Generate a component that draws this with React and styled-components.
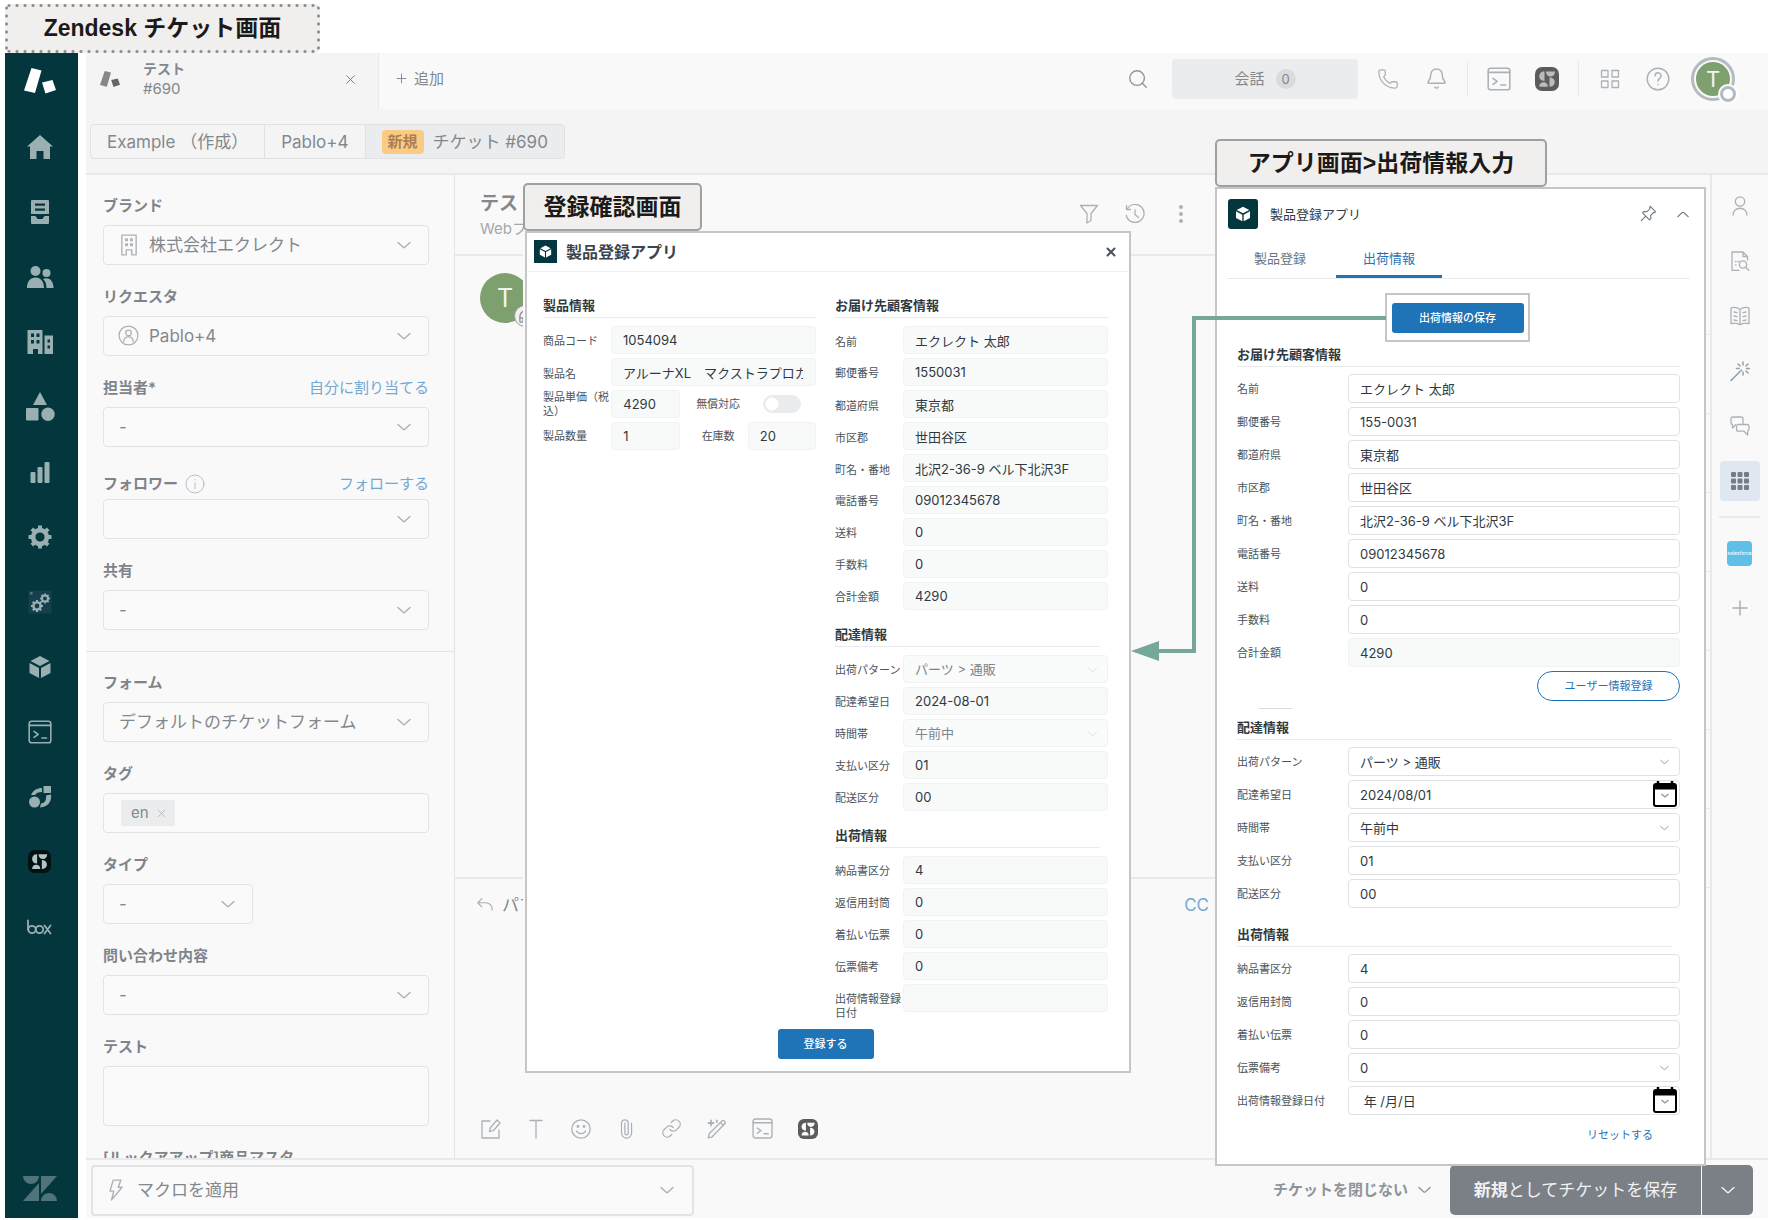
import React, { useId } from 'react'
import styled, { createGlobalStyle, css } from 'styled-components'
import { Search, Phone, Bell, Headphones, Paperclip, Link as LinkIcon, Plus, X } from 'lucide-react'

const colors = {
  nav: '#03363d',
  navIcon: '#9aafb1',
  bg: '#f9f9f9',
  bar: '#f4f4f4',
  line: '#e8e9ea',
  text: '#83888d',
  label: '#7f848a',
  icon: '#abb1b7',
  ink: '#2f3941',
  blue: '#1f73b7',
  softBlue: '#74a8d4',
  frame: '#c6c6c6',
  arrow: '#76a79b',
}

/* ---------- icons ---------- */

const Line = ({ size = 20, width = 1.3, children, ...rest }) => (
  <svg
    width={size}
    height={size}
    viewBox="0 0 20 20"
    fill="none"
    stroke="currentColor"
    strokeWidth={width}
    strokeLinejoin="round"
    strokeLinecap="round"
    aria-hidden="true"
    {...rest}
  >
    {children}
  </svg>
)

const Solid = ({ size = 28, children }) => (
  <svg width={size} height={size} viewBox="0 0 28 28" fill="currentColor" aria-hidden="true">
    {children}
  </svg>
)

const ChevronIcon = ({ width = 14 }) => (
  <svg width={width} height={width / 2 + 2} viewBox="0 0 14 9" fill="none" stroke="currentColor" strokeWidth="1.4" strokeLinecap="round" strokeLinejoin="round" aria-hidden="true">
    <path d="M1 1.5l5 4.6c.6.5 1.400.5 2 0l5-4.600" />
  </svg>
)

const TilesIcon = ({ width, second = 'currentColor' }) => (
  <svg width={width} viewBox="0 0 32 26" fill="currentColor" aria-hidden="true">
    <path d="M7.500 0l10 2.500L11 25 0 22.500z" />
    <path d="M18 14.500L28.500 12 32 22l-10.500 3.500z" fill={second} />
  </svg>
)

const TerminalIcon = ({ size = 22 }) => (
  <Line size={size}>
    <rect x="1" y="1" width="18" height="18" rx="2" />
    <path d="M1 4.500h18M5 9.500l3.500 2.500L5 14.500M11.500 15h4" />
  </Line>
)

const StepIcon = ({ bg, fg, size = 23 }) => (
  <svg width={size} height={size} viewBox="0 0 24 24" aria-hidden="true">
    <rect width="24" height="24" rx="7" fill={bg} />
    <g fill={fg}>
      <path d="M9.500 4.500v9.500C6 14 4.300 12 4.300 9.300S6 4.500 9.500 4.500z" />
      <path d="M11 4.500h9c0 3-1.800 5-4.500 5s-4.500-2-4.500-5z" />
      <path d="M14.500 10.500c3 0 5.200 1.600 5.200 4.600s-2.200 4.700-5.200 4.700z" />
      <path d="M4.300 19.800c0-3 1.600-4.500 4.200-4.500s4.300 1.500 4.300 4.500z" />
    </g>
  </svg>
)

const CubeIcon = ({ size = 24 }) => (
  <svg width={size} height={size} viewBox="0 0 24 24" fill="currentColor" aria-hidden="true">
    <path d="M12 1l9.500 5L12 11 2.500 6zM1.500 8l9.500 5v10l-9.500-5zM22.500 8L13 13v10l9.500-5z" />
  </svg>
)

const HomeIcon = () => (
  <Solid><path d="M14 2l13 11.500h-3V26h-6.500v-8h-7v8H4V13.500H1z" /></Solid>
)
const ViewsIcon = () => (
  <Solid>
    <path fillRule="evenodd" d="M6 2h16a1 1 0 0 1 1 1v13H5V3a1 1 0 0 1 1-1zm3 3.500v2.200h10V5.500zm0 5v2.200h10v-2.200z" />
    <path d="M5 18h4.500l2 3h5l2-3H23v7a1 1 0 0 1-1 1H6a1 1 0 0 1-1-1z" />
  </Solid>
)
const UsersIcon = () => (
  <Solid>
    <circle cx="9.500" cy="8" r="5" />
    <circle cx="20.500" cy="10" r="4" />
    <path d="M1 25c0-6 3-10.500 8.500-10.500S18 19 18 25zM17 16c6-2.500 10.500 1.500 10.500 9h-7c0-4-1-7-3.500-9z" />
  </Solid>
)
const OrgIcon = () => (
  <Solid>
    <path fillRule="evenodd" d="M1.500 2h15v24H12v-5H7v5H1.500zM5 5.500V9h3V5.500zm5.500 0V9h3V5.500zM5 12v3.500h3V12zm5.500 0v3.500h3V12z" />
    <path fillRule="evenodd" d="M18.500 7.500H27V26h-8.500zm3 4v3h2.500v-3zm0 6v3h2.500v-3z" />
  </Solid>
)
const ShapesIcon = () => (
  <svg width="30" height="30" viewBox="0 0 30 30" fill="currentColor" aria-hidden="true">
    <path d="M15 0l7 13H8z" />
    <rect x="1" y="16" width="12.500" height="12.500" rx="1" />
    <circle cx="23" cy="22.300" r="6.700" />
  </svg>
)
const ChartIcon = () => (
  <Solid>
    <rect x="4.500" y="14" width="5" height="11" rx="1" />
    <rect x="11.500" y="9" width="5" height="16" rx="1" />
    <rect x="18.500" y="4" width="5" height="21" rx="1" />
  </Solid>
)
const Gear = ({ cx, cy, r }) => (
  <g>
    <circle cx={cx} cy={cy} r={r * 0.6} fill="none" stroke="currentColor" strokeWidth={r * 0.4} />
    {[0, 45, 90, 135, 180, 225, 270, 315].map((a) => (
      <rect key={a} x={cx - r * 0.17} y={cy - r} width={r * 0.34} height={r * 0.35} transform={`rotate(${a} ${cx} ${cy})`} />
    ))}
  </g>
)
const GearIcon = () => <Solid><Gear cx={14} cy={14} r={11.5} /></Solid>
const GearsIcon = () => (
  <Solid>
    <rect x="2.500" y="2.500" width="23" height="23" fill="#163f50" />
    <rect x="4" y="4" width="2.500" height="2.500" opacity=".5" />
    <Gear cx={11} cy={18} r={6} />
    <Gear cx={19} cy={10.5} r={5} />
  </Solid>
)
const FlowIcon = () => (
  <Solid>
    <circle cx="8.500" cy="19" r="5.500" />
    <path d="M17.500 3H25v7h-7.500zM5 12c2-4.500 6-7 11-7v4c-3.500 0-6 1-7 3zM25 11.500c1 7-3 12.500-11 13l1-4c4-.5 5.500-3.500 5-8z" />
  </Solid>
)
const BoxIcon = () => (
  <svg width="25" height="16" viewBox="0 0 25 16" fill="none" stroke="currentColor" strokeWidth="1.800" strokeLinecap="round" aria-hidden="true">
    <path d="M1 1.500v9M17.500 6.500l6 8M23.500 6.500l-6 8" />
    <circle cx="5" cy="10.500" r="3.700" />
    <circle cx="12.500" cy="10.500" r="3.700" />
  </svg>
)
const ZendeskIcon = () => (
  <svg width="34" height="25" viewBox="0 0 34 25" fill="#4f7479" aria-label="Zendesk">
    <path d="M0 0h16a8 8 0 0 1-16 0zM16 7v18H0zM18 0h16L18 18zM18 25a8 8 0 0 1 16 0z" />
  </svg>
)
const BuildingIcon = () => (
  <Line size={22} width={1.2}>
    <path d="M3.500 1h13v18h-4v-4.500h-5V19h-4z" />
    <path d="M7 4.500h1.500v1.500H7zM11.500 4.500H13v1.500h-1.500zM7 9h1.500v1.500H7zM11.500 9H13v1.500h-1.500z" />
  </Line>
)
const PersonCircleIcon = () => (
  <Line size={21} width={1.2}>
    <circle cx="10" cy="10" r="9" />
    <circle cx="10" cy="7.500" r="2.700" />
    <path d="M5.500 16c0-3.500 2-4.800 4.500-4.800s4.500 1.300 4.500 4.800" />
  </Line>
)
const InfoIcon = () => (
  <Line size={20} width={1}>
    <circle cx="10" cy="10" r="9" />
    <path d="M10 9v6M10 5.500v.5" />
  </Line>
)
const BoltIcon = () => (
  <Line size={22}><path d="M7.500 1h7L12 7.500h3.500L6 19l2-8H4.500z" /></Line>
)
const FunnelIcon = () => <Line><path d="M1.500 1.500h17l-6.500 8v7l-4 2.500V9.500z" /></Line>
const HistoryIcon = () => (
  <Line>
    <path d="M2.500 4.500a9 9 0 1 1-1.200 7M1.500 1.500v4h4M10 6v4.500l3.500 3" />
  </Line>
)
const DotsIcon = () => (
  <svg width="20" height="20" viewBox="0 0 20 20" fill="currentColor" aria-hidden="true">
    <circle cx="10" cy="3" r="2" /><circle cx="10" cy="10" r="2" /><circle cx="10" cy="17" r="2" />
  </svg>
)
const ReplyIcon = () => (
  <Line size={18}><path d="M6.500 3L2 7.500 6.500 12M2 7.500h8c5 0 8 3 8 8" /></Line>
)
const EditIcon = () => (
  <Line><path d="M9 2H1v17h17v-8M16 1l3 3-6.500 7.500-4 1.200.8-4z" /></Line>
)
const TextIcon = () => <Line><path d="M4 1.500h12M10 1.500v17.500" /></Line>
const SmileIcon = () => (
  <Line>
    <circle cx="10" cy="10" r="9.200" />
    <path d="M5.500 12c1.800 3.500 7.200 3.500 9 0" />
    <circle cx="7" cy="7.500" r=".8" fill="currentColor" />
    <circle cx="13" cy="7.500" r=".8" fill="currentColor" />
  </Line>
)
const MagicPenIcon = () => (
  <Line>
    <path d="M1.200 18.800l1-4L15.500 1.500c.8-.8 3.500 1.700 2.700 2.700L5.200 17.800zM13.500 3.500l3 3" />
    <path d="M4 1.500v5M1.500 4h5M9.800 1.500v1.500" strokeWidth="1.800" />
  </Line>
)
const GridIcon = () => (
  <Line size={20}>
    <path d="M1.500 1.500h6.500v6.500H1.500zM12 1.500h6.500v6.500H12zM1.500 12h6.500v6.500H1.500zM12 12h6.500v6.500H12z" />
  </Line>
)
const HelpIcon = () => (
  <Line size={24} width={1.2}>
    <circle cx="10" cy="10" r="9" />
    <path d="M7.500 7.500c0-3.500 5-3.500 5-.3 0 2.300-2.500 2.300-2.500 4.600M10 14.500v.3" />
  </Line>
)
const UserIcon = () => (
  <Line><circle cx="10" cy="5.500" r="4.700" /><path d="M3 19c0-9 14-9 14 0" /></Line>
)
const DocSearchIcon = () => (
  <Line>
    <path d="M9 19.300H2V1h11l4.500 4.500V9M13 1v4.500h4.500M5.500 10.500h.5M5.500 14h.5M8 10.500h1" />
    <circle cx="13" cy="13.500" r="3.700" />
    <path d="M15.800 16.300l3 3" />
  </Line>
)
const BookIcon = () => (
  <Line>
    <path d="M10 3.500C7 1 4 1 1 2v15.500c3-.8 6-.8 9 1.300 3-2.100 6-2.100 9-1.300V2c-3-1-6-1-9 1.500zM10 3.500v15" />
    <path d="M4 6l3 .7M4 10l3 .7M4 14l3 .7M16 6l-3 .7M16 10l-3 .7M16 14l-3 .7" />
  </Line>
)
const WandIcon = () => (
  <Line>
    <path d="M1 19.500L11.500 9" stroke="#8e9fae" strokeWidth="1.600" />
    <path d="M13 1v3M18 3l-2 2M19.500 7.500h-3M18 12l-2-2M13 14v-3M8 3l2 2M6.500 7.500H9" stroke="#8e9fae" strokeWidth="1.500" />
  </Line>
)
const ChatsIcon = () => (
  <Line>
    <path d="M13 7.500V3c0-1.200-.8-2-2-2H3C1.800 1 1 1.800 1 3v3.500c0 1 .6 1.800 1.500 2V12l3-3.300" />
    <path d="M8 8.500h9c1.200 0 2 .8 2 2V13c0 1-.5 1.700-1.300 2v4L14 15.200H8.500c-1.200 0-2-.8-2-2v-2.700c0-1.200.500-2 1.500-2z" />
  </Line>
)
const AppsIcon = () => (
  <svg width="18" height="18" viewBox="0 0 18 18" fill="#787d84" aria-hidden="true">
    {[0, 6.5, 13].map((y) => [0, 6.5, 13].map((x) => (
      <rect key={`${x}-${y}`} x={x} y={y} width="5" height="5" rx="1" />
    )))}
  </svg>
)
const PinIcon = () => (
  <Line size={17} width={1.2}>
    <path d="M12 1.500l6.500 6.500-1.500 1-1-.3-3.500 3.600.3 4-1.700 1.200L3 9.300l1.200-1.600 4 .2 3.500-3.500-.4-1.300zM6.500 13.500L1.500 18.500" />
  </Line>
)
const CalendarIcon = () => (
  <svg width="24" height="26" viewBox="0 0 24 26" aria-hidden="true">
    <path d="M5 0v4M19 0v4" stroke="#000" strokeWidth="2.500" />
    <rect x="1" y="3" width="22" height="22" rx="2" fill="#fff" stroke="#000" strokeWidth="2" />
    <path d="M1 3h22v5.500H1z" />
    <path d="M8.500 13l3.500 3 3.500-3" fill="none" stroke="#87929d" strokeWidth="1.200" />
  </svg>
)

/* ---------- ticket form fields ---------- */

const SelectField = ({ label, value, icon, action, info, narrow }) => {
  const id = useId()
  return (
    <div>
      <FieldTop $tight={info}>
        <FieldLabel htmlFor={id}>{label}</FieldLabel>
        {info && <Info><InfoIcon /></Info>}
        {action && <FieldAction href="#">{action}</FieldAction>}
      </FieldTop>
      <SelectWrap $narrow={narrow}>
        {icon && <SelectIcon>{icon}</SelectIcon>}
        <Select id={id} $icon={!!icon} defaultValue={value}>
          <option value={value}>{value}</option>
        </Select>
        <SelectArrow><ChevronIcon /></SelectArrow>
      </SelectWrap>
    </div>
  )
}

/* ---------- app form rows ---------- */

const AppRow = ({ label, value, type = 'text', readOnly, compact }) => {
  const id = useId()
  return (
    <Row $compact={compact}>
      <RowLabel htmlFor={id}>{label}</RowLabel>
      <RowControl>
        {type === 'select' ? (
          <>
            <RowSelect id={id} $off={readOnly} disabled={readOnly} defaultValue={value}>
              <option value={value}>{value}</option>
            </RowSelect>
            <RowArrow $off={readOnly}><ChevronIcon width={9} /></RowArrow>
          </>
        ) : (
          <RowInput id={id} $off={readOnly} readOnly={readOnly} defaultValue={value} />
        )}
        {type === 'date' && <RowCalendar><CalendarIcon /></RowCalendar>}
      </RowControl>
    </Row>
  )
}

const Section = ({ title, rows, short, compact, readOnly, children }) => (
  <section>
    <SectionTitle $short={short} $compact={compact}>{title}</SectionTitle>
    <Rows>
      {rows.map(([label, value, type, off]) => (
        <AppRow key={label} label={label} value={value} type={type} readOnly={readOnly || off} compact={compact} />
      ))}
      {children}
    </Rows>
  </section>
)

const customerRows = (zip) => [
  ['名前', 'エクレクト 太郎'],
  ['郵便番号', zip],
  ['都道府県', '東京都'],
  ['市区郡', '世田谷区'],
  ['町名・番地', '北沢2-36-9 ベル下北沢3F'],
  ['電話番号', '09012345678'],
  ['送料', '0'],
  ['手数料', '0'],
  ['合計金額', '4290', 'text', true],
]

const deliveryRows = (date, dateType) => [
  ['出荷パターン', 'パーツ > 通販', 'select'],
  ['配達希望日', date, dateType],
  ['時間帯', '午前中', 'select'],
  ['支払い区分', '01'],
  ['配送区分', '00'],
]

const shippingRows = (noteType, dateType, date) => [
  ['納品書区分', '4'],
  ['返信用封筒', '0'],
  ['着払い伝票', '0'],
  ['伝票備考', '0', noteType],
  ['出荷情報登録日付', date, dateType],
]

const navItems = [
  ['ホーム', <HomeIcon />],
  ['ビュー', <ViewsIcon />],
  ['顧客', <UsersIcon />],
  ['組織', <OrgIcon />],
  ['オブジェクト', <ShapesIcon />],
  ['レポート', <ChartIcon />],
  ['管理', <GearIcon />],
  ['設定', <GearsIcon />],
  ['製品', <CubeIcon />],
  ['ターミナル', <TerminalIcon size={24} />],
  ['フロー', <FlowIcon />],
  ['ステップ', <StepIcon bg="#021214" fg="#b4c3c4" />],
  ['box', <BoxIcon />],
]

const ConfirmModal = () => (
  <Modal role="dialog" aria-label="製品登録アプリ">
    <ModalHeader>
      <AppBadge $size={23} $radius={0}><CubeIcon size={13} /></AppBadge>
      <ModalTitle>製品登録アプリ</ModalTitle>
      <PlainButton aria-label="閉じる"><X size={14} strokeWidth={3.5} color="#4a525a" /></PlainButton>
    </ModalHeader>
    <ModalBody>
      <Columns>
        <Section title="製品情報" compact readOnly rows={[['商品コード', '1054094'], ['製品名', 'アルーナXL　マクストラプロカ']]}>
          <SplitRow>
            <RowLabel htmlFor="price">製品単価（税込）</RowLabel>
            <RowInput id="price" $off readOnly defaultValue="4290" />
            <RowLabel $center htmlFor="free">無償対応</RowLabel>
            <Toggle id="free" type="checkbox" disabled />
          </SplitRow>
          <SplitRow>
            <RowLabel htmlFor="count">製品数量</RowLabel>
            <RowInput id="count" $off readOnly defaultValue="1" />
            <RowLabel $center htmlFor="stock">在庫数</RowLabel>
            <RowInput id="stock" $off readOnly defaultValue="20" />
          </SplitRow>
        </Section>
        <Sections $gap={12}>
          <Section title="お届け先顧客情報" compact readOnly rows={customerRows('1550031')} />
          <Section title="配達情報" short compact readOnly rows={deliveryRows('2024-08-01')} />
          <Section title="出荷情報" short compact readOnly rows={shippingRows('text', 'text', '')} />
        </Sections>
      </Columns>
      <BlueButton $width={96}>登録する</BlueButton>
    </ModalBody>
  </Modal>
)

const AppPanel = () => (
  <Panel>
    <PanelHeader>
      <AppBadge $size={30} $radius={3}><CubeIcon size={16} /></AppBadge>
      <PanelTitle>製品登録アプリ</PanelTitle>
      <PlainButton aria-label="固定"><PinIcon /></PlainButton>
      <PlainButton aria-label="折りたたむ"><Flip><ChevronIcon width={12} /></Flip></PlainButton>
    </PanelHeader>
    <Tabs role="tablist">
      <Tab role="tab">製品登録</Tab>
      <Tab role="tab" aria-selected="true" $active>出荷情報</Tab>
    </Tabs>
    <SaveFrame><BlueButton $width={132}>出荷情報の保存</BlueButton></SaveFrame>
    <Sections $gap={14}>
      <Section title="お届け先顧客情報" rows={customerRows('155-0031')}>
        <OutlineButton>ユーザー情報登録</OutlineButton>
      </Section>
      <StrayTop>
        <Section title="配達情報" short rows={deliveryRows('2024/08/01', 'date')} />
      </StrayTop>
      <Section title="出荷情報" short rows={shippingRows('select', 'date', ' 年 /月/日')} />
    </Sections>
    <ResetLink href="#">リセットする</ResetLink>
  </Panel>
)

const App = () => (
  <>
    <GlobalStyle />
    <Page>
      <Caption as={DottedCaption}>Zendesk チケット画面</Caption>
      <Frame>
        <Nav>
          <NavLogo><TilesIcon width={32} /></NavLogo>
          {navItems.map(([name, icon]) => (
            <NavButton key={name} aria-label={name}>{icon}</NavButton>
          ))}
          <NavFooter><ZendeskIcon /></NavFooter>
        </Nav>

        <Main>
          <Header>
            <TicketTab>
              <TilesIcon width={20} second="#666" />
              <TicketName>
                <b>テスト</b>
                <span>#690</span>
              </TicketName>
              <PlainButton aria-label="タブを閉じる"><X size={15} strokeWidth={1.5} color="#777c81" /></PlainButton>
            </TicketTab>
            <AddTab><Plus size={15} strokeWidth={1.5} />追加</AddTab>
            <HeaderTools>
              <IconButton aria-label="検索"><Search size={22} strokeWidth={1.5} color="#8f959a" /></IconButton>
              <TalkButton>会話 <TalkCount>0</TalkCount></TalkButton>
              <IconButton aria-label="電話"><Phone size={22} strokeWidth={1.4} /></IconButton>
              <IconButton aria-label="通知"><Bell size={23} strokeWidth={1.5} /></IconButton>
              <Divider />
              <IconButton aria-label="ターミナル"><TerminalIcon size={24} /></IconButton>
              <IconButton aria-label="ステップ"><StepIcon bg="#5c5c5c" fg="#b9bdc0" size={24} /></IconButton>
              <Divider />
              <IconButton aria-label="製品一覧"><GridIcon /></IconButton>
              <IconButton aria-label="ヘルプ"><HelpIcon /></IconButton>
              <Profile aria-label="プロフィール"><ProfileFace>T</ProfileFace><Status /></Profile>
            </HeaderTools>
          </Header>

          <Crumbs>
            <CrumbList>
              <Crumb href="#">Example （作成）</Crumb>
              <Crumb href="#">Pablo+4</Crumb>
              <Crumb href="#" $current><NewBadge>新規</NewBadge>チケット #690</Crumb>
            </CrumbList>
          </Crumbs>

          <Body>
            <Fields>
              <FieldGroup>
                <SelectField label="ブランド" value="株式会社エクレクト" icon={<BuildingIcon />} />
                <SelectField label="リクエスタ" value="Pablo+4" icon={<PersonCircleIcon />} />
                <SelectField label="担当者*" value="-" action="自分に割り当てる" />
                <SelectField label="フォロワー" value="" action="フォローする" info />
                <SelectField label="共有" value="-" />
              </FieldGroup>
              <FieldGroup>
                <SelectField label="フォーム" value="デフォルトのチケットフォーム" />
                <div>
                  <FieldTop><FieldLabel htmlFor="tags">タグ</FieldLabel></FieldTop>
                  <TagBox>
                    <Tag>en <PlainButton aria-label="en を削除"><X size={13} strokeWidth={1.5} color={colors.icon} /></PlainButton></Tag>
                    <TagInput id="tags" />
                  </TagBox>
                </div>
                <SelectField label="タイプ" value="-" narrow />
                <SelectField label="問い合わせ内容" value="-" />
                <div>
                  <FieldTop><FieldLabel htmlFor="test">テスト</FieldLabel></FieldTop>
                  <TextBox id="test" />
                </div>
                <SelectField label="[ルックアアップ]商品マスタ" value="-" />
              </FieldGroup>
            </Fields>

            <Conversation>
              <TicketHeader>
                <div>
                  <TicketTitle>テスト</TicketTitle>
                  <TicketVia>Webフォーム</TicketVia>
                </div>
                <TicketTools>
                  <FunnelIcon />
                  <HistoryIcon />
                  <DotsIcon />
                </TicketTools>
              </TicketHeader>
              <Messages>
                <Avatar>T<AvatarBadge><Headphones size={15} /></AvatarBadge></Avatar>
              </Messages>
              <Composer>
                <ComposerTop>
                  <ReplyIcon />
                  <span>パブリック返信</span>
                  <CcLink href="#">CC</CcLink>
                </ComposerTop>
                <ComposerTools>
                  <PlainButton aria-label="編集"><EditIcon /></PlainButton>
                  <PlainButton aria-label="書式"><TextIcon /></PlainButton>
                  <PlainButton aria-label="絵文字"><SmileIcon /></PlainButton>
                  <PlainButton aria-label="添付"><Upright><Paperclip size={20} strokeWidth={1.5} /></Upright></PlainButton>
                  <PlainButton aria-label="リンク"><LinkIcon size={21} strokeWidth={1.5} /></PlainButton>
                  <PlainButton aria-label="AI"><MagicPenIcon /></PlainButton>
                  <PlainButton aria-label="ターミナル"><TerminalIcon size={21} /></PlainButton>
                  <PlainButton aria-label="ステップ"><StepIcon bg="#5c5c5c" fg="#f9f9f9" size={20} /></PlainButton>
                </ComposerTools>
              </Composer>
            </Conversation>

            <AppColumn>
              <AppSlot $tall />
              {[1, 2, 3, 4, 5, 6, 7].map((n) => <AppSlot key={n} />)}
            </AppColumn>

            <Rail>
              <RailButton aria-label="ユーザー"><UserIcon /></RailButton>
              <RailButton aria-label="検索"><DocSearchIcon /></RailButton>
              <RailButton aria-label="ナレッジ"><BookIcon /></RailButton>
              <RailButton aria-label="アシスト"><WandIcon /></RailButton>
              <RailButton aria-label="サイド会話"><ChatsIcon /></RailButton>
              <RailButton aria-label="アプリ" $active><AppsIcon /></RailButton>
              <RailLine />
              <RailButton aria-label="Salesforce"><Salesforce>salesforce</Salesforce></RailButton>
              <RailButton aria-label="追加"><Plus size={24} strokeWidth={1.5} /></RailButton>
            </Rail>
          </Body>

          <Footer>
            <MacroBox>
              <BoltIcon />
              <MacroSelect aria-label="マクロ" defaultValue="マクロを適用"><option>マクロを適用</option></MacroSelect>
              <ChevronIcon />
            </MacroBox>
            <KeepOpen>チケットを閉じない <ChevronIcon width={13} /></KeepOpen>
            <SaveGroup>
              <SaveButton><span><b>新規</b>としてチケットを保存</span></SaveButton>
              <SaveButton $arrow aria-label="その他"><ChevronIcon /></SaveButton>
            </SaveGroup>
          </Footer>
        </Main>
      </Frame>

      <ModalLayer>
        <Caption $width={179}>登録確認画面</Caption>
        <ConfirmModal />
      </ModalLayer>
      <PanelLayer>
        <Caption $width={332}>アプリ画面&gt;出荷情報入力</Caption>
        <AppPanel />
      </PanelLayer>
      <Arrow width="255" height="356" viewBox="0 0 255 356" aria-hidden="true">
        <path d="M255 11H63v333H24" fill="none" stroke={colors.arrow} strokeWidth="4" />
        <path d="M0 344l28-10v20z" fill={colors.arrow} />
      </Arrow>
    </Page>
  </>
)

const GlobalStyle = createGlobalStyle`
  * { box-sizing: border-box; }
  body {
    margin: 0;
    background: #fff;
    color: ${colors.text};
    font-family: Inter, 'Noto Sans CJK JP', sans-serif;
    font-size: 15px;
    line-height: 20px;
  }
  button, input, select, textarea { font: inherit; color: inherit; margin: 0; }
  button { cursor: pointer; }
  a { text-decoration: none; }
  svg { display: block; flex: none; }
`

const Page = styled.div`
  position: relative;
  height: 100vh;
  padding: 4px 0 2px 5px;
  overflow: hidden;
  display: flex;
  flex-direction: column;
`

const Caption = styled.h1`
  margin: 0;
  flex: none;
  width: ${({ $width }) => $width}px;
  height: 48px;
  line-height: 45px;
  text-align: center;
  font-family: 'Liberation Sans', 'Noto Sans CJK JP', sans-serif;
  font-size: 23px;
  font-weight: 700;
  white-space: nowrap;
  color: #1c1a19;
  background: #f0efed;
  border: 2px solid #a0a0a0;
  border-radius: 5px;
`

/* widely spaced dots, which a dotted border can't do */
const DottedCaption = styled.h1`
  && {
    width: 315px;
    height: 49px;
    line-height: 45px;
    padding: 2px;
    border: 0;
    background:
      radial-gradient(circle, #8c8c8c 1px, transparent 2px) 0 0 / 8px 3px repeat-x,
      radial-gradient(circle, #8c8c8c 1px, transparent 2px) 0 100% / 8px 3px repeat-x,
      radial-gradient(circle, #8c8c8c 1px, transparent 2px) 0 0 / 3px 8px repeat-y,
      radial-gradient(circle, #8c8c8c 1px, transparent 2px) 100% 0 / 3px 8px repeat-y,
      #f0efed;
  }
`

const Frame = styled.div`
  flex: 1;
  min-height: 0;
  display: flex;
`

const PlainButton = styled.button`
  display: flex;
  align-items: center;
  justify-content: center;
  padding: 0;
  border: 0;
  background: none;
`

const Nav = styled.nav`
  flex: none;
  width: 73px;
  padding-right: 4px;
  display: flex;
  flex-direction: column;
  align-items: center;
  background: ${colors.nav};
  color: ${colors.navIcon};
`

const NavLogo = styled.div`
  height: 61px;
  padding-top: 15px;
  color: #fff;
`

const NavButton = styled(PlainButton)`
  width: 100%;
  height: 65px;
`

const NavFooter = styled.div`
  margin-top: auto;
  padding-bottom: 17px;
`

const Main = styled.main`
  flex: 1;
  min-width: 0;
  padding-left: 8px;
  display: flex;
  flex-direction: column;
`

const Header = styled.header`
  flex: none;
  height: 56px;
  display: flex;
  align-items: center;
  background: ${colors.bg};
`

const HeaderTools = styled.div`
  margin-left: auto;
  padding: 0 33px 5px 0;
  display: flex;
  align-items: center;
`

const TicketTab = styled.div`
  width: 293px;
  height: 56px;
  padding: 0 20px 4px 14px;
  display: flex;
  align-items: center;
  background: ${colors.bar};
  border-right: 1px solid ${colors.line};
`

const TicketName = styled.div`
  flex: 1;
  padding-left: 23px;
  display: flex;
  flex-direction: column;

  b { font-size: 14px; }
`

const AddTab = styled(PlainButton)`
  margin: 0 0 5px 15px;
  gap: 5px;
`

const IconButton = styled(PlainButton)`
  width: 48px;
  height: 48px;
  color: ${colors.icon};
`

const TalkButton = styled.button`
  width: 186px;
  height: 40px;
  margin: 0 6px 0 10px;
  padding: 0;
  display: flex;
  align-items: center;
  justify-content: center;
  gap: 11px;
  border: 0;
  border-radius: 4px;
  background: #ebecee;
`

const TalkCount = styled.span`
  width: 20px;
  height: 20px;
  border-radius: 50%;
  font-size: 13px;
  background: #d9dbdd;
`

const Divider = styled.span`
  width: 1px;
  height: 36px;
  margin: 0 7px;
  background: ${colors.line};
`

const Profile = styled(PlainButton)`
  position: relative;
  width: 44px;
  height: 44px;
  margin-left: 9px;
  border: 3px solid #b4bac1;
  border-radius: 50%;
`

const ProfileFace = styled.span`
  width: 34px;
  height: 34px;
  border-radius: 50%;
  line-height: 34px;
  font-size: 22px;
  color: #f1f5ee;
  background: #7e9f6e;
`

const Status = styled.span`
  position: absolute;
  right: -4px;
  bottom: -4px;
  width: 16px;
  height: 16px;
  border: 3px solid #b4bac1;
  border-radius: 50%;
  background: #fff;
  box-shadow: 0 0 0 2px #fff;
`

const Crumbs = styled.div`
  flex: none;
  height: 66px;
  padding: 15px 4px;
  background: ${colors.bar};
  border-bottom: 2px solid ${colors.line};
`

const CrumbList = styled.nav`
  width: max-content;
  height: 35px;
  display: flex;
  border: 1px solid #dfe1e3;
  border-radius: 4px;
  overflow: hidden;
`

const Crumb = styled.a`
  padding: 0 16px;
  display: flex;
  align-items: center;
  gap: 9px;
  font-size: 17px;
  color: ${colors.text};
  background: ${({ $current }) => ($current ? '#ebecee' : 'none')};

  & + & { border-left: 1px solid #dfe1e3; }
`

const NewBadge = styled.span`
  height: 24px;
  padding: 0 6px;
  line-height: 24px;
  border-radius: 4px;
  font-size: 15px;
  font-weight: 600;
  color: #ad7f55;
  background: #fbcb83;
`

const Body = styled.div`
  flex: 1;
  min-height: 0;
  display: flex;
  background: ${colors.bg};
`

const Fields = styled.form`
  flex: none;
  width: 369px;
  overflow: hidden;
  border-right: 1px solid #e1e3e5;
`

const FieldGroup = styled.div`
  padding: 21px 25px 21px 17px;
  display: flex;
  flex-direction: column;
  gap: 22px;

  & + & { border-top: 1px solid #e1e3e5; }
`

const FieldTop = styled.div`
  height: ${({ $tight }) => ($tight ? 30 : 20)}px;
  margin-bottom: ${({ $tight }) => ($tight ? 0 : 9)}px;
  display: flex;
  align-items: center;
`

const FieldLabel = styled.label`
  font-weight: 600;
  color: ${colors.label};
`

const Info = styled.span`
  margin-left: 7px;
  color: #b9bec3;
`

const FieldAction = styled.a`
  margin-left: auto;
  color: ${colors.softBlue};
`

const SelectWrap = styled.div`
  position: relative;
  height: 40px;
  width: ${({ $narrow }) => ($narrow ? '150px' : '100%')};
`

const box = css`
  border: 1px solid #e1e3e5;
  border-radius: 4px;
  background: #fafafa;
`

const Select = styled.select`
  ${box}
  appearance: none;
  width: 100%;
  height: 40px;
  padding: 0 40px 0 ${({ $icon }) => ($icon ? 45 : 15)}px;
  font-size: 17px;
`

const SelectIcon = styled.span`
  position: absolute;
  left: 15px;
  top: 9px;
  color: ${colors.icon};
`

const SelectArrow = styled.span`
  position: absolute;
  right: 18px;
  top: 16px;
  color: ${colors.icon};
  pointer-events: none;
`

const TagBox = styled.div`
  ${box}
  height: 40px;
  padding: 0 17px;
  display: flex;
  align-items: center;
`

const Tag = styled.span`
  height: 26px;
  padding: 0 7px 0 10px;
  display: flex;
  align-items: center;
  gap: 6px;
  background: #ebecee;
`

const TagInput = styled.input`
  flex: 1;
  min-width: 0;
  border: 0;
  outline: 0;
  background: none;
`

const TextBox = styled.textarea`
  ${box}
  display: block;
  width: 100%;
  height: 60px;
  resize: none;
`

const Conversation = styled.section`
  flex: 1;
  min-width: 0;
  display: flex;
  flex-direction: column;
`

const TicketHeader = styled.div`
  height: 81px;
  padding: 16px 37px 0 25px;
  display: flex;
  justify-content: space-between;
  border-bottom: 2px solid ${colors.line};
`

const TicketTitle = styled.h2`
  margin: 0;
  line-height: 26px;
  font-size: 19px;
`

const TicketVia = styled.p`
  margin: 2px 0 0;
  font-size: 15px;
  color: #a3a8ad;
`

const TicketTools = styled.div`
  height: 46px;
  display: flex;
  align-items: center;
  gap: 26px;
  color: ${colors.icon};
`

const Messages = styled.div`
  flex: 1;
  padding: 17px 25px;
`

const Avatar = styled.div`
  position: relative;
  width: 50px;
  height: 50px;
  border-radius: 50%;
  line-height: 50px;
  text-align: center;
  font-size: 25px;
  color: #f1f5ee;
  background: #7e9f6e;
`

const AvatarBadge = styled.span`
  position: absolute;
  right: -6px;
  bottom: -4px;
  width: 22px;
  height: 22px;
  display: flex;
  align-items: center;
  justify-content: center;
  border: 1px solid #9a9fa5;
  border-radius: 50%;
  color: #868c92;
  background: #f1f1f1;
`

const Composer = styled.div`
  height: 281px;
  padding: 16px 19px 19px 21px;
  display: flex;
  flex-direction: column;
  justify-content: space-between;
  border-top: 2px solid ${colors.line};
`

const ComposerTop = styled.div`
  display: flex;
  align-items: center;
  gap: 8px;
  font-size: 17px;

  svg { color: ${colors.icon}; }
`

const CcLink = styled.a`
  margin-left: auto;
  color: ${colors.softBlue};
`

const ComposerTools = styled.div`
  padding-left: 5px;
  display: flex;
  gap: 25px;
  color: ${colors.icon};
`

const Upright = styled.span`
  transform: rotate(-45deg);
`

const AppColumn = styled.div`
  flex: none;
  width: 482px;
  border-left: 1px solid ${colors.line};
`

const AppSlot = styled.div`
  height: ${({ $tall }) => ($tall ? 160 : 79)}px;
  border-bottom: 1px solid ${colors.line};
`

const Rail = styled.aside`
  flex: none;
  width: 58px;
  padding: 11px 1px 0 0;
  display: flex;
  flex-direction: column;
  align-items: center;
  gap: 15px;
  border-left: 2px solid ${colors.line};
`

const RailButton = styled(PlainButton)`
  width: 40px;
  height: 40px;
  border-radius: 4px;
  color: ${colors.icon};
  background: ${({ $active }) => ($active ? '#dfe8f1' : 'none')};
`

const RailLine = styled.div`
  width: 41px;
  height: 2px;
  background: ${colors.line};
`

const Salesforce = styled.span`
  width: 25px;
  height: 25px;
  border-radius: 4px;
  line-height: 24px;
  font-size: 5px;
  color: #fff;
  background: #5fbfe6;
`

const Footer = styled.footer`
  flex: none;
  height: 60px;
  padding: 2px 15px 0 5px;
  display: flex;
  align-items: center;
  background: ${colors.bg};
  border-top: 2px solid ${colors.line};
`

const MacroBox = styled.div`
  ${box}
  border-width: 2px;
  width: 603px;
  height: 51px;
  padding: 0 18px 0 12px;
  display: flex;
  align-items: center;
  color: ${colors.icon};
`

const MacroSelect = styled.select`
  appearance: none;
  flex: 1;
  padding: 0 0 0 10px;
  border: 0;
  background: none;
  font-size: 17px;
  color: ${colors.text};
`

const KeepOpen = styled(PlainButton)`
  margin: 0 19px 0 auto;
  gap: 10px;
  font-weight: 600;
  color: #8f9499;
`

const SaveGroup = styled.div`
  display: flex;
  gap: 1px;
`

const SaveButton = styled(PlainButton)`
  width: ${({ $arrow }) => ($arrow ? 51 : 251)}px;
  height: 50px;
  border-radius: ${({ $arrow }) => ($arrow ? '0 5px 5px 0' : '5px 0 0 5px')};
  font-size: 17px;
  color: #f1f2f3;
  background: #7b8087;
`

/* ---------- floating windows ---------- */

const ModalLayer = styled.div`
  position: absolute;
  left: 523px;
  top: 183px;
`

const PanelLayer = styled.div`
  position: absolute;
  right: 62px;
  top: 139px;
`

const Arrow = styled.svg`
  position: absolute;
  right: 382px;
  top: 307px;
`

const Modal = styled.div`
  width: 606px;
  margin-left: 2px;
  background: #fff;
  border: 2px solid ${colors.frame};
  box-shadow: -2px 0 0 ${colors.bg};
`

const ModalHeader = styled.div`
  height: 39px;
  padding: 0 11px 1px 7px;
  display: flex;
  align-items: center;
  border-bottom: 1px solid #eef0f0;
`

const AppBadge = styled.span`
  width: ${({ $size }) => $size}px;
  height: ${({ $size }) => $size}px;
  border-radius: ${({ $radius }) => $radius}px;
  display: flex;
  align-items: center;
  justify-content: center;
  color: #fff;
  background: ${colors.nav};
`

const ModalTitle = styled.h2`
  margin: 0;
  flex: 1;
  padding-left: 9px;
  font-size: 16px;
  font-weight: 600;
  color: #3c454d;
`

const ModalBody = styled.div`
  padding: 21px 21px 12px 16px;
  display: flex;
  flex-direction: column;
  align-items: center;
  gap: 17px;
`

const Columns = styled.div`
  width: 100%;
  display: grid;
  grid-template-columns: 1fr 1fr;
  gap: 19px;
`

const Sections = styled.div`
  display: flex;
  flex-direction: column;
  gap: ${({ $gap }) => $gap}px;
`

const SectionTitle = styled.h3`
  margin: 0 ${({ $short }) => ($short ? 8 : 0)}px ${({ $compact }) => ($compact ? 8 : 7)}px 0;
  line-height: 24px;
  font-size: 13px;
  font-weight: 700;
  color: #2f3941;
  border-bottom: 1px solid #e9ebed;
`

const Rows = styled.div`
  display: flex;
  flex-direction: column;
  gap: 4px;
`

const Row = styled.div`
  display: grid;
  grid-template-columns: ${({ $compact }) => ($compact ? 68 : 111)}px 1fr;
  grid-auto-rows: ${({ $compact }) => ($compact ? 28 : 29)}px;
  align-items: ${({ $compact }) => ($compact ? 'baseline' : 'center')};
`

const SplitRow = styled.div`
  display: grid;
  grid-template-columns: 1fr 1fr 1fr 1fr;
  grid-auto-rows: 28px;
  align-items: center;
`

const RowLabel = styled.label`
  line-height: 14px;
  font-size: 11px;
  color: #49545c;
  padding-left: ${({ $center }) => ($center ? 9 : 0)}px;
  text-align: ${({ $center }) => ($center ? 'center' : 'left')};
`

const RowControl = styled.div`
  position: relative;
  height: 100%;
`

const control = css`
  display: block;
  width: 100%;
  min-width: 0;
  height: 100%;
  padding: 0 12px 0 11px;
  border: 1px solid ${({ $off }) => ($off ? '#f1f3f3' : '#dfe2e4')};
  border-radius: 4px;
  font-size: 13px;
  color: ${colors.ink};
  background: ${({ $off }) => ($off ? '#f8f9f9' : '#fff')};
`

const RowInput = styled.input`
  ${control}
`

const RowSelect = styled.select`
  ${control}
  appearance: none;

  &:disabled {
    opacity: 1;
    color: #7d848a;
    background: #fafbfb;
  }
`

const RowArrow = styled.span`
  position: absolute;
  right: 11px;
  top: 12px;
  color: ${({ $off }) => ($off ? '#d8dcde' : '#87929d')};
  pointer-events: none;
`

const RowCalendar = styled.span`
  position: absolute;
  right: 3px;
  top: 1px;
`

const Toggle = styled.input`
  appearance: none;
  width: 38px;
  height: 18px;
  justify-self: center;
  border-radius: 9px;
  background: radial-gradient(circle at 9px 9px, #fff 6px, #e9ebed 7px);
`

const BlueButton = styled.button`
  width: ${({ $width }) => $width}px;
  height: 30px;
  padding: 0;
  border: 0;
  border-radius: 3px;
  font-size: 11px;
  font-weight: 500;
  color: #fff;
  background: ${colors.blue};
`

const Panel = styled.div`
  width: 491px;
  padding-bottom: 19px;
  background: #fff;
  border: 2px solid ${colors.frame};

  ${Sections} {
    padding: 0 24px 0 20px;
  }
`

const PanelHeader = styled.div`
  height: 49px;
  padding: 0 15px 0 11px;
  display: flex;
  align-items: center;
  gap: 12px;
  color: #68737d;
`

const PanelTitle = styled.h2`
  margin: 0;
  flex: 1;
  font-size: 13px;
  font-weight: 400;
  color: ${colors.ink};
`

const Flip = styled.span`
  margin-left: 8px;
  transform: rotate(180deg);
`

const Tabs = styled.div`
  margin: 0 14px 14px 10px;
  height: 41px;
  display: flex;
  gap: 3px;
  border-bottom: 1px solid #e9ebed;
`

const Tab = styled.button`
  width: 106px;
  padding: 3px 0 0;
  border: 0;
  border-bottom: 3px solid ${({ $active }) => ($active ? colors.blue : 'transparent')};
  background: none;
  font-size: 13px;
  color: ${({ $active }) => ($active ? colors.blue : '#68737d')};
`

const SaveFrame = styled.div`
  width: 145px;
  height: 49px;
  margin-left: 168px;
  display: flex;
  align-items: center;
  justify-content: center;
  border: 2px solid ${colors.frame};
`

const OutlineButton = styled.button`
  align-self: flex-end;
  width: 143px;
  height: 30px;
  padding: 0;
  border: 1px solid ${colors.blue};
  border-radius: 15px;
  background: #fff;
  font-size: 11px;
  color: ${colors.blue};
`

const StrayTop = styled.div`
  position: relative;

  &::before {
    content: '';
    position: absolute;
    left: 22px;
    top: -7px;
    width: 33px;
    height: 1px;
    background: #d8dcde;
  }
`

const ResetLink = styled.a`
  display: block;
  margin: 10px 51px 0;
  text-align: right;
  font-size: 11px;
  color: ${colors.blue};
`

export default App
